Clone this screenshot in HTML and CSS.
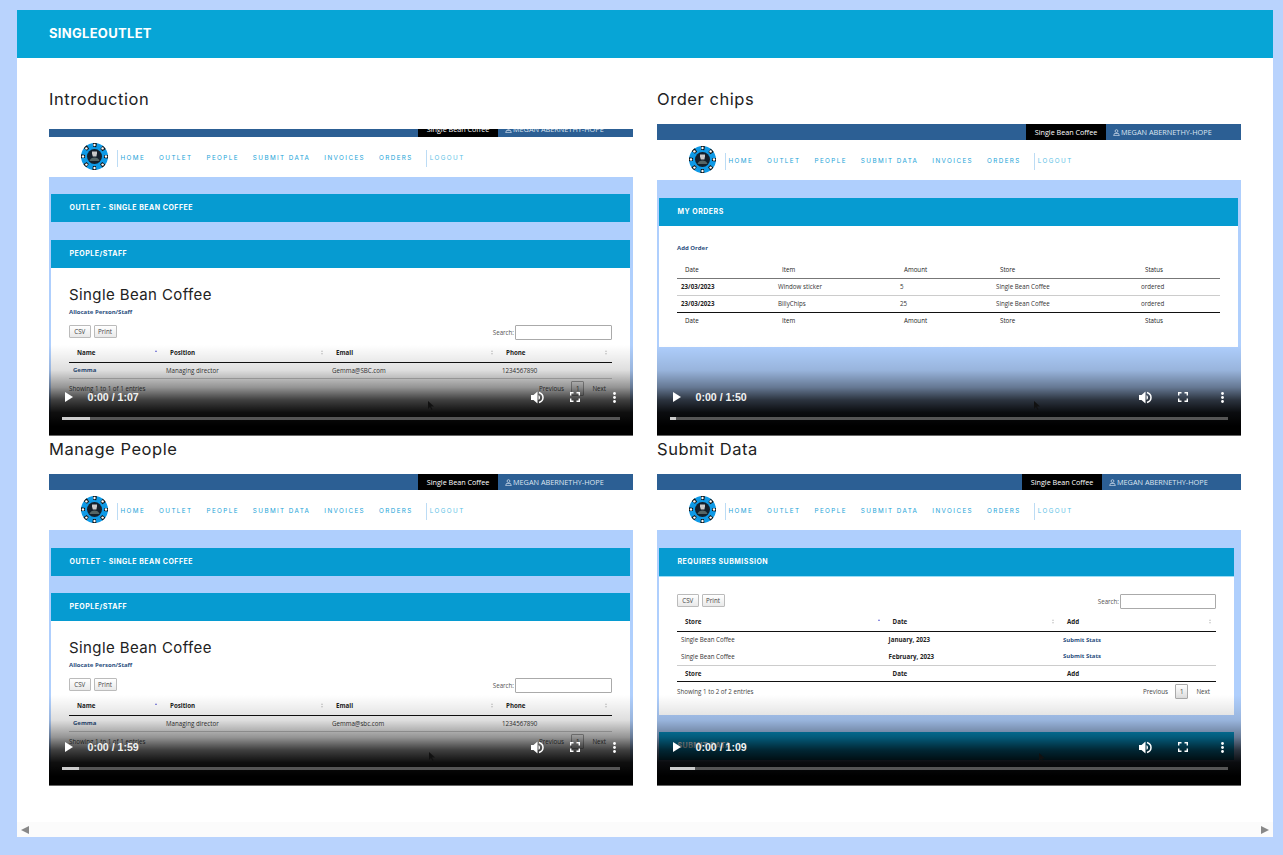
FILE: index.html
```html
<!DOCTYPE html>
<html>
<head>
    <meta charset="utf-8">
    <title>SingleOutlet</title>
    <link rel="stylesheet" href="styles.css">
</head>
<body>
<svg class="defs" width="0" height="0">
    <symbol id="chip" viewBox="0 0 27 27">
        <circle cx="13.5" cy="13.5" r="13.5" fill="#0f9ae6"/>
        <circle cx="13.5" cy="13.5" r="11.5" fill="none" stroke="#111" stroke-width="4" stroke-dasharray="3.6 5.43" stroke-dashoffset="1.8"/>
        <circle cx="13.5" cy="13.5" r="7.5" fill="#14202c"/>
        <g fill="#fff">
            <circle cx="13.5" cy="2" r="1.2"/><circle cx="13.5" cy="25" r="1.2"/>
            <circle cx="2" cy="13.5" r="1.2"/><circle cx="25" cy="13.5" r="1.2"/>
            <circle cx="5.4" cy="5.4" r="1.2"/><circle cx="21.6" cy="5.4" r="1.2"/>
            <circle cx="5.4" cy="21.6" r="1.2"/><circle cx="21.6" cy="21.6" r="1.2"/>
        </g>
        <path d="M11 8.500h5v2l-.6 3h-3.6L11 10.500z" fill="#c9c9c9"/>
        <path d="M8.500 18c1-3 2.500-3.500 5-3.500s4 .5 5 3.500z" fill="#566"/>
    </symbol>
    <symbol id="person" viewBox="0 0 10 10">
        <circle cx="5" cy="3" r="2" fill="none" stroke="currentColor"/>
        <path d="M2 6.500h6l1 3H1z" fill="none" stroke="currentColor"/>
    </symbol>
    <symbol id="play" viewBox="0 0 8 10"><path d="M0 0l8 5-8 5z" fill="#fff"/></symbol>
    <symbol id="volume" viewBox="0 0 13 13">
        <path d="M0 4v5h2.500L6.500 12.500V.5L2.500 4z" fill="#fff"/>
        <path d="M8 1.500c2.500.8 4 2.700 4 5s-1.500 4.200-4 5" fill="none" stroke="#fff" stroke-width="1.500"/>
        <path d="M7.500 4.200c1 .4 1.500 1.200 1.500 2.300s-.5 1.900-1.500 2.300z" fill="#fff"/>
    </symbol>
    <symbol id="full" viewBox="0 0 10 10">
        <path d="M.7 3.500V.7h2.800M6.500.7h2.800v2.800M9.300 6.500v2.800H6.500M3.500 9.300H.7V6.500" fill="none" stroke="#fff" stroke-width="1.400"/>
    </symbol>
    <symbol id="kebab" viewBox="0 0 3 11">
        <circle cx="1.500" cy="1.500" r="1.400" fill="#fff"/><circle cx="1.500" cy="5.500" r="1.400" fill="#fff"/><circle cx="1.500" cy="9.500" r="1.400" fill="#fff"/>
    </symbol>
    <symbol id="arrow" viewBox="0 0 6 9"><path d="M0 0v8l2-2 1.500 3 1-.5L3 5.500h3z" fill="#111"/></symbol>
</svg>

<div class="app">
    <header class="app-head">SINGLEOUTLET</header>

    <main class="cards">
        <!-- intro -->
        <section class="card">
            <h2>Introduction</h2>
            <div class="video">
                <div class="clip clip-intro">
                    <div class="screen">
                        <div class="topbar"><span class="tab">Single Bean Coffee</span><span class="user"><svg><use href="#person"/></svg>MEGAN ABERNETHY-HOPE</span></div>
                        <nav class="nav">
                            <svg class="logo"><use href="#chip"/></svg>
                            <ul class="menu">
                                <li>HOME</li><li>OUTLET</li><li>PEOPLE</li><li>SUBMIT DATA</li><li>INVOICES</li><li>ORDERS</li>
                            </ul>
                            <span class="logout">LOGOUT</span>
                        </nav>
                        <div class="content">
                            <div class="bar">OUTLET - SINGLE BEAN COFFEE</div>
                            <div class="bar bar-next">PEOPLE/STAFF</div>
                            <div class="panel">
                                <h3>Single Bean Coffee</h3>
                                <a class="link">Allocate Person/Staff</a>
                                <div class="tools">
                                    <button>CSV</button><button>Print</button>
                                    <label class="search">Search:<span class="input"></span></label>
                                </div>
                                <table class="tbl people">
                                    <thead><tr>
                                        <th><div class="th">Name<i class="sort asc"></i></div></th>
                                        <th><div class="th">Position<i class="sort"></i></div></th>
                                        <th><div class="th">Email<i class="sort"></i></div></th>
                                        <th><div class="th">Phone<i class="sort"></i></div></th>
                                    </tr></thead>
                                    <tbody><tr><td><a class="link">Gemma</a></td><td>Managing director</td><td>Gemma@SBC.com</td><td>1234567890</td></tr></tbody>
                                </table>
                                <div class="pager">
                                    <span>Showing 1 to 1 of 1 entries</span>
                                    <span class="pages">Previous<b class="page">1</b>Next</span>
                                </div>
                            </div>
                        </div>
                    </div>
                </div>
                <div class="controls">
                    <div class="ctl-row">
                        <svg class="ic-play"><use href="#play"/></svg><span class="time">0:00 / 1:07</span>
                        <svg class="ic-vol"><use href="#volume"/></svg><svg class="ic-full"><use href="#full"/></svg><svg class="ic-more"><use href="#kebab"/></svg>
                    </div>
                    <div class="track"><div class="done" style="width:28px"></div></div>
                </div>
                <svg class="pointer pointer-a"><use href="#arrow"/></svg>
            </div>
        </section>

        <!-- orders -->
        <section class="card">
            <h2>Order chips</h2>
            <div class="video">
                <div class="clip">
                    <div class="screen">
                        <div class="topbar"><span class="tab">Single Bean Coffee</span><span class="user"><svg><use href="#person"/></svg>MEGAN ABERNETHY-HOPE</span></div>
                        <nav class="nav">
                            <svg class="logo"><use href="#chip"/></svg>
                            <ul class="menu">
                                <li>HOME</li><li>OUTLET</li><li>PEOPLE</li><li>SUBMIT DATA</li><li>INVOICES</li><li>ORDERS</li>
                            </ul>
                            <span class="logout">LOGOUT</span>
                        </nav>
                        <div class="content">
                            <div class="bar">MY ORDERS</div>
                            <div class="panel panel-orders">
                                <a class="link">Add Order</a>
                                <table class="tbl orders">
                                    <thead><tr><th>Date</th><th>Item</th><th>Amount</th><th>Store</th><th>Status</th></tr></thead>
                                    <tbody>
                                        <tr><td><b>23/03/2023</b></td><td>Window sticker</td><td>5</td><td>Single Bean Coffee</td><td>ordered</td></tr>
                                        <tr><td><b>23/03/2023</b></td><td>BillyChips</td><td>25</td><td>Single Bean Coffee</td><td>ordered</td></tr>
                                    </tbody>
                                    <tfoot><tr><th>Date</th><th>Item</th><th>Amount</th><th>Store</th><th>Status</th></tr></tfoot>
                                </table>
                            </div>
                        </div>
                    </div>
                </div>
                <div class="controls">
                    <div class="ctl-row">
                        <svg class="ic-play"><use href="#play"/></svg><span class="time">0:00 / 1:50</span>
                        <svg class="ic-vol"><use href="#volume"/></svg><svg class="ic-full"><use href="#full"/></svg><svg class="ic-more"><use href="#kebab"/></svg>
                    </div>
                    <div class="track"><div class="done" style="width:6px"></div></div>
                </div>
                <svg class="pointer pointer-b"><use href="#arrow"/></svg>
            </div>
        </section>

        <!-- people -->
        <section class="card">
            <h2>Manage People</h2>
            <div class="video">
                <div class="clip">
                    <div class="screen">
                        <div class="topbar"><span class="tab">Single Bean Coffee</span><span class="user"><svg><use href="#person"/></svg>MEGAN ABERNETHY-HOPE</span></div>
                        <nav class="nav">
                            <svg class="logo"><use href="#chip"/></svg>
                            <ul class="menu">
                                <li>HOME</li><li>OUTLET</li><li>PEOPLE</li><li>SUBMIT DATA</li><li>INVOICES</li><li>ORDERS</li>
                            </ul>
                            <span class="logout">LOGOUT</span>
                        </nav>
                        <div class="content">
                            <div class="bar">OUTLET - SINGLE BEAN COFFEE</div>
                            <div class="bar bar-next">PEOPLE/STAFF</div>
                            <div class="panel">
                                <h3>Single Bean Coffee</h3>
                                <a class="link">Allocate Person/Staff</a>
                                <div class="tools">
                                    <button>CSV</button><button>Print</button>
                                    <label class="search">Search:<span class="input"></span></label>
                                </div>
                                <table class="tbl people">
                                    <thead><tr>
                                        <th><div class="th">Name<i class="sort asc"></i></div></th>
                                        <th><div class="th">Position<i class="sort"></i></div></th>
                                        <th><div class="th">Email<i class="sort"></i></div></th>
                                        <th><div class="th">Phone<i class="sort"></i></div></th>
                                    </tr></thead>
                                    <tbody><tr><td><a class="link">Gemma</a></td><td>Managing director</td><td>Gemma@sbc.com</td><td>1234567890</td></tr></tbody>
                                </table>
                                <div class="pager">
                                    <span>Showing 1 to 1 of 1 entries</span>
                                    <span class="pages">Previous<b class="page">1</b>Next</span>
                                </div>
                            </div>
                        </div>
                    </div>
                </div>
                <div class="controls">
                    <div class="ctl-row">
                        <svg class="ic-play"><use href="#play"/></svg><span class="time">0:00 / 1:59</span>
                        <svg class="ic-vol"><use href="#volume"/></svg><svg class="ic-full"><use href="#full"/></svg><svg class="ic-more"><use href="#kebab"/></svg>
                    </div>
                    <div class="track"><div class="done" style="width:17px"></div></div>
                </div>
                <svg class="pointer pointer-c"><use href="#arrow"/></svg>
            </div>
        </section>

        <!-- submit -->
        <section class="card">
            <h2>Submit Data</h2>
            <div class="video">
                <div class="clip">
                    <div class="screen screen-narrow">
                        <div class="topbar"><span class="tab">Single Bean Coffee</span><span class="user"><svg><use href="#person"/></svg>MEGAN ABERNETHY-HOPE</span></div>
                        <nav class="nav">
                            <svg class="logo"><use href="#chip"/></svg>
                            <ul class="menu">
                                <li>HOME</li><li>OUTLET</li><li>PEOPLE</li><li>SUBMIT DATA</li><li>INVOICES</li><li>ORDERS</li>
                            </ul>
                            <span class="logout">LOGOUT</span>
                        </nav>
                        <div class="content">
                            <div class="bar">REQUIRES SUBMISSION</div>
                            <div class="panel panel-submit">
                                <div class="tools">
                                    <button>CSV</button><button>Print</button>
                                    <label class="search">Search:<span class="input"></span></label>
                                </div>
                                <table class="tbl submit">
                                    <thead><tr>
                                        <th><div class="th">Store<i class="sort asc"></i></div></th>
                                        <th><div class="th">Date<i class="sort"></i></div></th>
                                        <th><div class="th">Add<i class="sort"></i></div></th>
                                    </tr></thead>
                                    <tbody>
                                        <tr><td>Single Bean Coffee</td><td><b>January, 2023</b></td><td><a class="link">Submit Stats</a></td></tr>
                                        <tr><td>Single Bean Coffee</td><td><b>February, 2023</b></td><td><a class="link">Submit Stats</a></td></tr>
                                    </tbody>
                                    <tfoot><tr><th>Store</th><th>Date</th><th>Add</th></tr></tfoot>
                                </table>
                                <div class="pager">
                                    <span>Showing 1 to 2 of 2 entries</span>
                                    <span class="pages">Previous<b class="page">1</b>Next</span>
                                </div>
                            </div>
                            <div class="bar bar-next">SUBMIT DATA</div>
                        </div>
                    </div>
                </div>
                <div class="controls">
                    <div class="ctl-row">
                        <svg class="ic-play"><use href="#play"/></svg><span class="time">0:00 / 1:09</span>
                        <svg class="ic-vol"><use href="#volume"/></svg><svg class="ic-full"><use href="#full"/></svg><svg class="ic-more"><use href="#kebab"/></svg>
                    </div>
                    <div class="track"><div class="done" style="width:25px"></div></div>
                </div>
                <svg class="pointer pointer-d"><use href="#arrow"/></svg>
            </div>
        </section>
    </main>

    <div class="hscroll"><i class="arr-l"></i><i class="arr-r"></i></div>
</div>
</body>
</html>
```

FILE: styles.css
```css
* {box-sizing:border-box;}
html,body {margin:0;height:100%;}
body {background:#b9d3fd;padding:10px 10px 18px 17px;overflow:hidden;font-family:"Inter","Liberation Sans",sans-serif;}
.defs {position:absolute;}

.app {height:827px;background:#fff;display:flex;flex-direction:column;}
.app-head {height:48px;line-height:47px;background:#07a5d6;color:#fff;font-weight:700;font-size:13px;letter-spacing:.3px;padding-left:32px;flex:none;}
.cards {flex:1;padding:27px 32px 0;display:grid;grid-template-columns:584px 584px;grid-auto-rows:350px;column-gap:24px;align-content:start;}
.hscroll {height:15px;flex:none;background:#fbfbfb;display:flex;justify-content:space-between;align-items:center;padding:0 4px;}
.arr-l {border-right:8px solid #888;border-top:4.5px solid transparent;border-bottom:4.5px solid transparent;}
.arr-r {border-left:8px solid #888;border-top:4.5px solid transparent;border-bottom:4.5px solid transparent;}

.card h2 {margin:0;height:39px;line-height:29px;font-size:16.5px;font-weight:400;color:#222;letter-spacing:.55px;}

/* video frame */
.video {position:relative;height:312px;overflow:hidden;background:#fff;border-bottom:1px solid #666;}
.clip {height:100%;overflow:hidden;}
.clip-intro {height:calc(100% - 5px);margin-top:5px;}
.clip-intro .screen {margin-top:-8px;}
.clip-intro .content {padding-top:17px;}
.clip-intro .bar-next {margin-top:18px;}
.screen {height:330px;display:flex;flex-direction:column;font-family:"Open Sans","Liberation Sans",sans-serif;font-size:6.2px;color:#333;}

.topbar {height:16px;flex:none;background:#2c5f94;display:flex;color:#fff;line-height:16px;padding-left:369px;}
.screen-narrow .topbar {padding-left:365px;}
.tab {width:80px;background:#000;text-align:center;font-size:7.2px;}
.user {display:flex;align-items:center;padding-left:7px;font-size:7.3px;color:#dde6f2;white-space:nowrap;}
.user svg {width:7px;height:7px;margin-right:1px;}

.nav {height:40px;flex:none;background:#fff;display:flex;align-items:center;padding:2px 0 0 32px;font-family:"Inter","Liberation Sans",sans-serif;font-size:6.3px;letter-spacing:1.4px;color:#1aa3d8;}
.logo {width:27px;height:27px;margin-top:-4px;}
.menu {list-style:none;margin:0 0 0 8.5px;padding:0 0 0 3px;height:17px;display:flex;align-items:center;gap:14px;border-left:1px solid #bcdcf5;}
.logout {margin-left:13px;padding-left:3px;height:17px;line-height:17px;border-left:1px solid #bcdcf5;color:#5cbfe6;}

.content {flex:1;background:#afcffd;padding:18px 3px 0 2px;display:flex;flex-direction:column;}
.screen-narrow .content {padding-right:7px;}
.bar {height:28px;flex:none;line-height:28px;background:#069bd1;color:#fff;font-family:"Inter","Liberation Sans",sans-serif;font-weight:700;font-size:7px;letter-spacing:.5px;padding-left:18.5px;}
.bar-next {margin-top:17px;}
.panel {background:#fff;flex:1;padding:18px 18px 0 18px;}
.panel-orders {flex:none;height:121px;padding-top:18px;}
.panel-submit {flex:none;height:139px;border-top:1px solid #9bdcf5;padding-top:17px;}
.panel h3 {margin:0;height:18px;line-height:18px;font-family:"Inter","Liberation Sans",sans-serif;font-size:15px;font-weight:400;letter-spacing:.4px;color:#222;}

.link {display:block;color:#2c4f80;font-weight:700;line-height:8px;font-size:6px;}
.panel > .link {margin-top:4px;}
.panel-orders > .link {margin-top:0;height:8px;}

.tools {display:flex;align-items:flex-start;gap:3px;margin-top:9px;height:15px;}
.panel-submit .tools {margin-top:0;}
.tools button {height:13px;width:21.5px;padding:0;font:inherit;color:#444;background:linear-gradient(#fff,#e9e9e9);border:1px solid #bbb;border-radius:1px;}
.tools button + button {width:23px;}
.search {margin-left:auto;display:flex;align-items:center;gap:1px;color:#555;height:15px;}
.input {width:97px;height:15px;background:#fff;border:1px solid #aaa;border-radius:1px;}
.panel-submit .input {width:96px;}

.tbl {border-collapse:collapse;table-layout:fixed;margin-top:4px;width:543px;}
.tbl th {font-weight:700;text-align:left;padding:0 4px 0 8px;height:18px;color:#222;}
.tbl td {padding:0 0 0 4px;height:16px;}
.tbl thead th {border-bottom:1px solid #111;}
.th {display:flex;justify-content:space-between;align-items:center;}
.tbl td b {color:#222;}
.tbl tbody tr td {border-bottom:1px solid #ccc;}

.people th:nth-child(1) {width:93px;}
.people th:nth-child(2) {width:166px;}
.people th:nth-child(3) {width:170px;}

.orders {margin-top:10px;}
.orders thead th {height:16px;border-bottom:1px solid #777;font-weight:400;}
.orders td {height:17px;}
.orders tfoot th {height:16px;font-weight:400;}
.orders th:nth-child(1) {width:97px;}
.orders th:nth-child(2) {width:122px;}
.orders th:nth-child(3) {width:96px;}
.orders th:nth-child(4) {width:145px;}
.orders tbody tr:last-child td {border-bottom:1px solid #111;}

.submit {width:539px;}
.submit td {height:17px;}
.submit th:nth-child(1) {width:207.6px;}
.submit th:nth-child(2) {width:174.4px;}
.submit tbody tr:first-child td {border-bottom:0;}
.submit tfoot th {height:16px;border-bottom:1px solid #111;}

.sort {display:block;width:3px;height:6px;position:relative;}
.sort::before,.sort::after {content:"";display:block;width:0;height:0;border-left:1.5px solid transparent;border-right:1.5px solid transparent;}
.sort::before {border-bottom:2.5px solid #ccc;margin-bottom:1px;}
.sort::after {border-top:2.5px solid #ccc;}
.sort.asc::before {border-bottom-color:#6a6ad8;}
.sort.asc::after {border-top-color:transparent;}

.pager {display:flex;justify-content:space-between;align-items:center;height:17px;margin-top:1px;color:#444;}
.pages {display:flex;align-items:center;padding-right:6px;}
.page {width:13.5px;height:15px;line-height:14px;margin:0 8px 0 7px;text-align:center;font-weight:400;background:linear-gradient(#fff,#ddd);border:1px solid #aaa;border-radius:1px;}

/* player controls */
.controls {position:absolute;left:0;right:0;bottom:0;height:90px;padding-top:42px;background:linear-gradient(rgba(0,0,0,0),rgba(0,0,0,.13) 28%,rgba(0,0,0,.42) 47%,rgba(0,0,0,.75) 61%,rgba(0,0,0,.94) 75%,#000 90%);}
.ctl-row {height:20px;display:flex;align-items:center;padding-left:16px;}
.ic-play {width:8px;height:10px;}
.time {margin-left:14.5px;width:53px;font:700 10.6px "Liberation Sans",sans-serif;color:#f2f2f2;white-space:nowrap;flex:none;}
.ic-vol {width:13px;height:13px;margin-left:auto;}
.ic-full {width:10px;height:10px;margin-left:26px;}
.ic-more {width:3px;height:11px;margin-left:33px;margin-right:17.5px;}
.track {height:3px;margin:9.5px 13px 0;background:#555;}
.done {height:3px;background:#ccc;}

.pointer {position:absolute;width:6px;height:9px;top:277px;}
.pointer-a {left:379px;}
.pointer-b {left:377px;}
.pointer-c {left:380px;top:278px;}
.pointer-d {left:382px;top:279px;}
```
